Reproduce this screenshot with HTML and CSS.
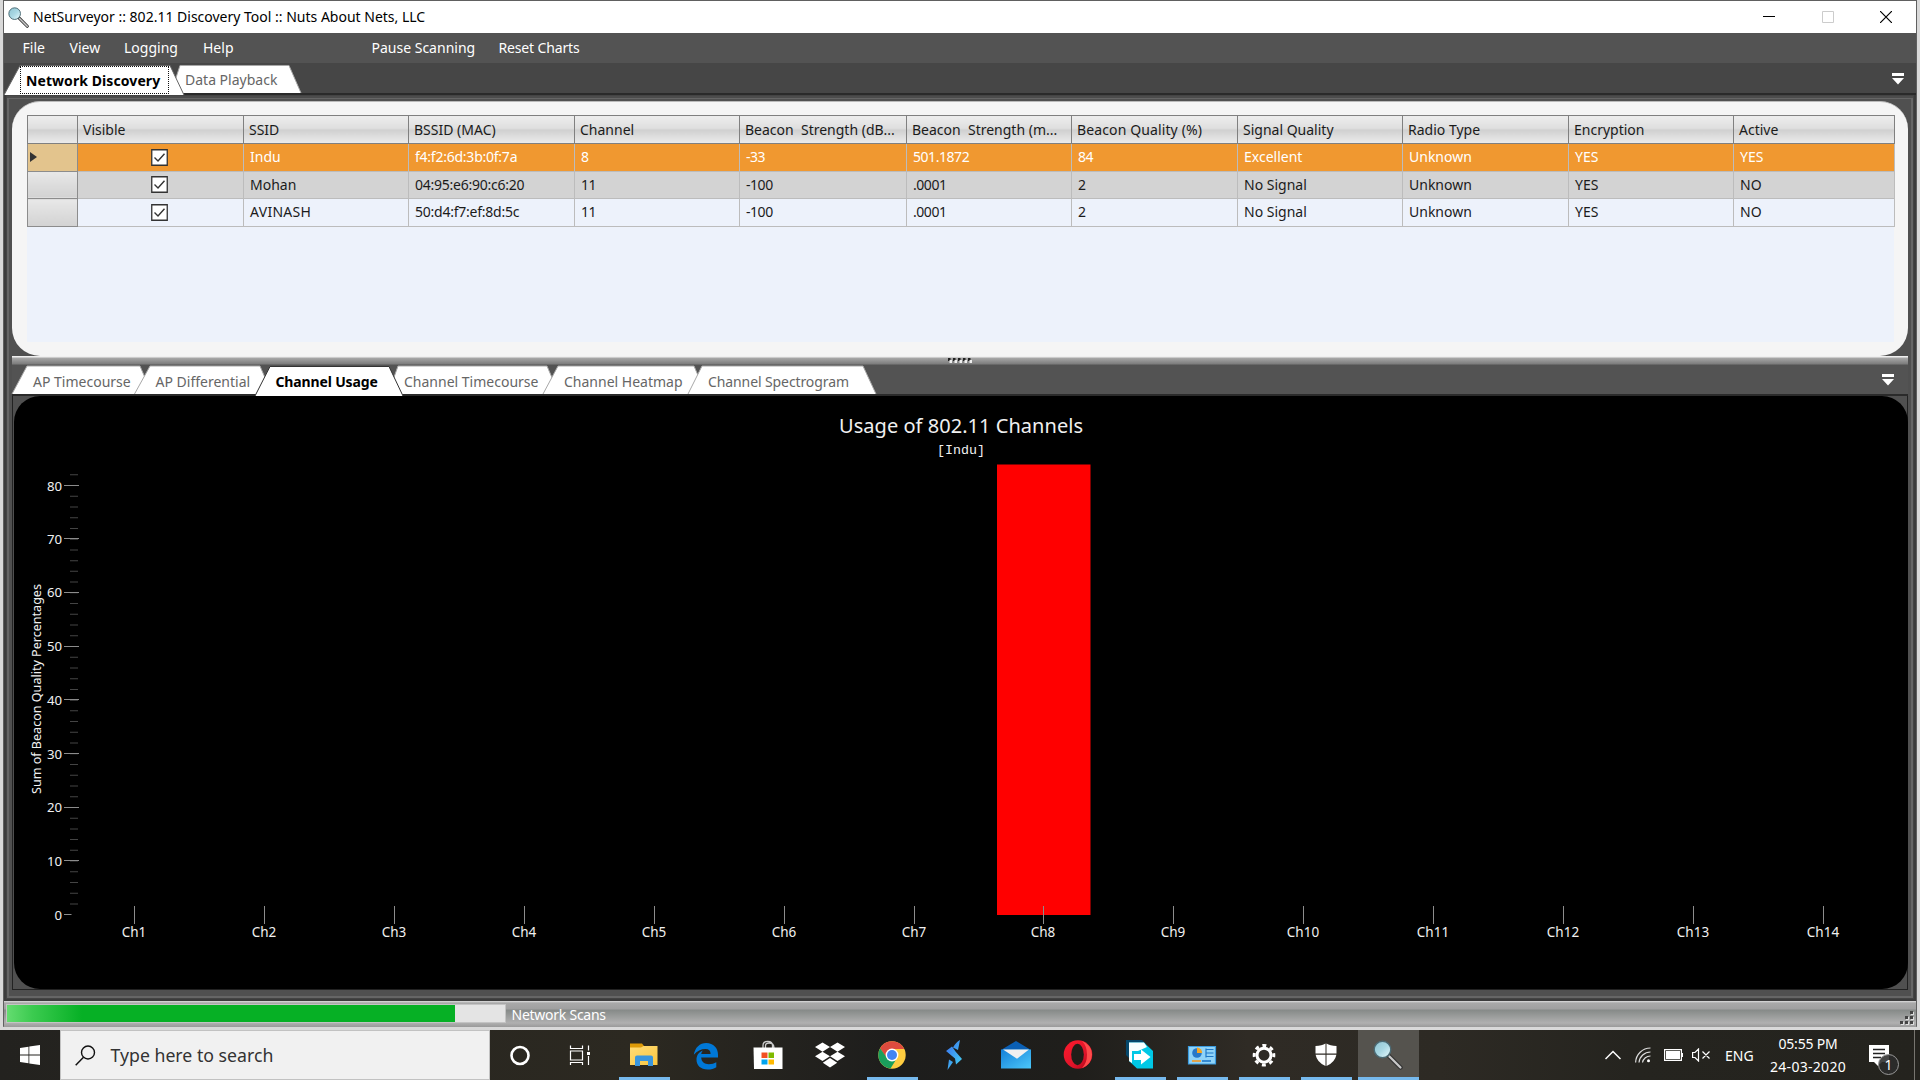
FILE: index.html
```html
<!DOCTYPE html>
<html lang="en">
<head>
<meta charset="utf-8">
<title>NetSurveyor</title>
<link rel="stylesheet" href="styles.css">
</head>
<body>
<svg width="0" height="0" class="defs">
  <defs>
    <linearGradient id="lens" x1="0" y1="0" x2="1" y2="1"><stop offset="0" stop-color="#8fc4d2"/><stop offset=".5" stop-color="#a9d8e4"/><stop offset="1" stop-color="#eafbff"/></linearGradient>
    <linearGradient id="folder" x1="0" y1="0" x2="1" y2="1"><stop offset="0" stop-color="#ffdc78"/><stop offset="1" stop-color="#fbc740"/></linearGradient>
    <linearGradient id="bolt" x1="0" y1="0" x2="1" y2="1"><stop offset="0" stop-color="#3a6cf0"/><stop offset="1" stop-color="#45d8f0"/></linearGradient>
    <linearGradient id="mail" x1="0" y1="0" x2="1" y2="1"><stop offset="0" stop-color="#1480d8"/><stop offset="1" stop-color="#4cc8fa"/></linearGradient>
    <linearGradient id="opera" x1="0" y1="0" x2="1" y2="1"><stop offset="0" stop-color="#ff1b2d"/><stop offset=".6" stop-color="#e0142a"/><stop offset="1" stop-color="#a70014"/></linearGradient>
    <symbol id="magnifier" viewBox="0 0 30 30">
      <path d="M16 16L27.500 27.500" stroke="#333" stroke-width="4.500" stroke-linecap="round"/>
      <path d="M16.500 16.500L27.500 27.500" stroke="#c9c9c9" stroke-width="2.200" stroke-linecap="round"/>
      <circle cx="9.500" cy="9.500" r="8.300" fill="url(#lens)" stroke="#4b6a74" stroke-width="1.400"/>
    </symbol>
    <symbol id="overflow" viewBox="0 0 12 12"><path d="M0 0H12V3H0ZM0 5H12L6 11.500Z" fill="#fff"/></symbol>
  </defs>
</svg>
<div class="screen">
  <main class="window">
    <header class="titlebar">
      <svg class="app-icon"><use href="#magnifier"/></svg>
      <h1>NetSurveyor :: 802.11 Discovery Tool :: Nuts About Nets, LLC</h1>
      <div class="controls">
        <svg width="12" height="12" viewBox="0 0 12 12"><path d="M0 5.500H12" stroke="#000"/></svg>
        <svg width="12" height="12" viewBox="0 0 12 12"><path d="M.5 .5H11.500V11.500H.5Z" fill="none" stroke="#ccc"/></svg>
        <svg width="12" height="12" viewBox="0 0 12 12"><path d="M0 0L12 12M12 0L0 12" stroke="#000" stroke-width="1.200"/></svg>
      </div>
    </header>
    <nav class="menu">
      <span class="m-file">File</span><span class="m-view">View</span><span class="m-log">Logging</span><span class="m-help">Help</span><span class="m-pause">Pause Scanning</span><span class="m-reset">Reset Charts</span>
    </nav>
    <div class="tabs tabs-main">
      <div class="tab active first w-discovery"><svg viewBox="0 0 180 30" preserveAspectRatio="none"><path d="M0 30L16 .5H166L180 30" /></svg><span class="focus">Network Discovery</span></div>
      <div class="tab w-playback"><svg viewBox="0 0 121 29" preserveAspectRatio="none"><path d="M-9 29L0 .5H109L121 29"/></svg><span>Data Playback</span></div>
      <svg class="overflow"><use href="#overflow"/></svg>
    </div>
    <div class="frame">
      <section class="networks">
        <table class="grid">
          <colgroup><col class="c50"><col class="c166"><col class="c165"><col class="c166"><col class="c165"><col class="c167"><col class="c165"><col class="c166"><col class="c165"><col class="c166"><col class="c165"><col class="c161"></colgroup>
          <thead><tr><th></th><th>Visible</th><th>SSID</th><th>BSSID (MAC)</th><th>Channel</th><th>Beacon&nbsp; Strength (dB...</th><th>Beacon&nbsp; Strength (m...</th><th class="wide">Beacon Quality (%)</th><th>Signal Quality</th><th>Radio Type</th><th>Encryption</th><th>Active</th></tr></thead>
          <tbody>
            <tr class="selected"><td class="head"><i class="pointer"></i></td><td class="chk"><svg width="17" height="17" viewBox="0 0 17 17"><path d="M.75 .75H16.250V16.250H.75Z" fill="#fff" stroke="#333" stroke-width="1.300"/><path d="M3.500 8.500L7 12L13.500 4.800" fill="none" stroke="#333" stroke-width="1.400"/></svg></td><td>Indu</td><td class="mac">f4:f2:6d:3b:0f:7a</td><td>8</td><td class="num">-33</td><td class="num">501.1872</td><td class="num">84</td><td>Excellent</td><td>Unknown</td><td>YES</td><td>YES</td></tr>
            <tr class="alt"><td class="head"></td><td class="chk"><svg width="17" height="17" viewBox="0 0 17 17"><path d="M.75 .75H16.250V16.250H.75Z" fill="#fff" stroke="#333" stroke-width="1.300"/><path d="M3.500 8.500L7 12L13.500 4.800" fill="none" stroke="#333" stroke-width="1.400"/></svg></td><td>Mohan</td><td class="mac">04:95:e6:90:c6:20</td><td class="num">11</td><td class="num">-100</td><td class="num">.0001</td><td>2</td><td>No Signal</td><td>Unknown</td><td>YES</td><td>NO</td></tr>
            <tr><td class="head"></td><td class="chk"><svg width="17" height="17" viewBox="0 0 17 17"><path d="M.75 .75H16.250V16.250H.75Z" fill="#fff" stroke="#333" stroke-width="1.300"/><path d="M3.500 8.500L7 12L13.500 4.800" fill="none" stroke="#333" stroke-width="1.400"/></svg></td><td class="caps">AVINASH</td><td class="mac">50:d4:f7:ef:8d:5c</td><td class="num">11</td><td class="num">-100</td><td class="num">.0001</td><td>2</td><td>No Signal</td><td>Unknown</td><td>YES</td><td>NO</td></tr>
          </tbody>
        </table>
      </section>
      <div class="splitter"><svg width="24" height="5" viewBox="0 0 24 5"><path d="M0 1.500H24" stroke="#222" stroke-width="3" stroke-dasharray="2.500 2.500"/><path d="M1.500 3.500H24" stroke="#eee" stroke-width="3" stroke-dasharray="2.500 2.500"/></svg></div>
      <div class="tabs tabs-charts">
        <div class="tab w-time"><svg viewBox="0 0 132 28"><path d="M0 28L15 0H128L140 28"/></svg><span>AP Timecourse</span></div>
        <div class="tab w-diff"><svg viewBox="0 0 128 28"><path d="M-9.500 28L6 0H116L128 28"/></svg><span>AP Differential</span></div>
        <div class="tab active w-usage"><svg viewBox="0 0 132 30"><path d="M-15 30L0 .5H119L133 30"/></svg><span>Channel Usage</span></div>
        <div class="tab w-ctime"><svg viewBox="0 0 150 28"><path d="M-10 28L0 0H149L161 28"/></svg><span>Channel Timecourse</span></div>
        <div class="tab w-heat"><svg viewBox="0 0 140 28"><path d="M-9 28L6 0H142L154 28"/></svg><span>Channel Heatmap</span></div>
        <div class="tab w-spec"><svg viewBox="0 0 174 28"><path d="M-14 28L0 0H161L174 28"/></svg><span>Channel Spectrogram</span></div>
        <svg class="overflow"><use href="#overflow"/></svg>
      </div>
      <section class="chart">
        <svg width="1894" height="593" viewBox="14 396 1894 593">
          <text class="chart-title" x="961" y="432.500" textLength="244">Usage of 802.11 Channels</text>
          <text class="chart-sub" x="961" y="454">[Indu]</text>
          <rect x="997" y="464.500" width="93.500" height="450.500" fill="#f00"/>
          <text class="axis-title" transform="translate(41 689) rotate(-90)" textLength="210">Sum of Beacon Quality Percentages</text>
          <path class="minor" d="M74 904.500V474"/>
          <path class="major" d="M64 485.500H79M64 538.500H79M64 592.500H79M64 646.500H79M64 699.500H79M64 753.500H79M64 807.500H79M64 860.500H79M64 914.500H71.500"/>
          <g class="ylabels">
            <text x="62" y="491">80</text><text x="62" y="543.500">70</text><text x="62" y="597">60</text><text x="62" y="651">50</text><text x="62" y="705">40</text><text x="62" y="758.500">30</text><text x="62" y="812">20</text><text x="62" y="866">10</text><text x="62" y="919.500">0</text>
          </g>
          <path class="major" d="M134.500 906V924M264.500 906V924M394.500 906V924M524.500 906V924M654.500 906V924M784.500 906V924M914.500 906V924M1043.500 906V924M1173.500 906V924M1303.500 906V924M1433.500 906V924M1563.500 906V924M1693.500 906V924M1823.500 906V924"/>
          <g class="xlabels">
            <text x="134" y="937">Ch1</text><text x="264" y="937">Ch2</text><text x="394" y="937">Ch3</text><text x="524" y="937">Ch4</text><text x="654" y="937">Ch5</text><text x="784" y="937">Ch6</text><text x="914" y="937">Ch7</text><text x="1043" y="937">Ch8</text><text x="1173" y="937">Ch9</text><text x="1303" y="937">Ch10</text><text x="1433" y="937">Ch11</text><text x="1563" y="937">Ch12</text><text x="1693" y="937">Ch13</text><text x="1823" y="937">Ch14</text>
          </g>
        </svg>
      </section>
    </div>
    <footer class="status">
      <div class="progress"><div class="bar"></div></div>
      <span>Network Scans</span>
      <svg class="grip" width="16" height="16" viewBox="0 0 16 16"><path d="M3 13h3v3h-3zM8 13h3v3h-3zM13 13h3v3h-3zM8 8h3v3h-3zM13 8h3v3h-3zM13 3h3v3h-3z" fill="#ddd"/><path d="M2 12h3v3h-3zM7 12h3v3h-3zM12 12h3v3h-3zM7 7h3v3h-3zM12 7h3v3h-3zM12 2h3v3h-3z" fill="#444"/></svg>
    </footer>
  </main>
  <div class="taskbar">
    <div class="start"><svg width="20" height="20" viewBox="0 0 20 20"><path d="M0 3L8.500 1.700V9.500H0ZM9.300 1.500L20 0V9.500H9.300ZM0 10.500H8.500V18.300L0 17ZM9.300 10.500H20V20L9.300 18.500Z" fill="#fff"/></svg></div>
    <div class="search"><svg width="21" height="21" viewBox="0 0 21 21"><circle cx="13" cy="7.500" r="6.500" fill="none" stroke="#111" stroke-width="1.400"/><path d="M8.500 12.300L.7 20.200" stroke="#111" stroke-width="1.500"/></svg><span>Type here to search</span></div>
    <div class="apps">
      <div class="app"><svg viewBox="0 0 32 32"><circle cx="16" cy="16.500" r="8.500" fill="none" stroke="#fff" stroke-width="2.600"/></svg></div>
      <div class="app"><svg viewBox="0 0 32 32" fill="none" stroke="#fff" stroke-width="1.200"><path d="M4.500 6.500V9.500H16.500V6.500M4.500 12H16.500V21H4.500ZM4.500 26V23.500H16.500V26M22.500 6.500V11.500M22.500 17V26"/><path d="M21 14.500H24" stroke-width="3"/></svg></div>
      <div class="app open"><svg viewBox="0 0 32 32"><path d="M2 4.500H14L16 7H29V26H2Z" fill="#dd9a08"/><path d="M2 8.500H13L15.500 7H29.500V26H2Z" fill="url(#folder)"/><path d="M7 27V18.500Q7 16.500 9 16.500H23Q25 16.500 25 18.500V27H20V22H12V27Z" fill="#3a96dd"/></svg></div>
      <div class="app"><svg viewBox="0 0 32 32"><path d="M3.800 15.800C5 8.500 9.800 4 16.200 4C23.500 4 28 9.200 28 15.500V18.500H11.200C11.400 23 14.500 25.200 18.800 25.200C21.800 25.200 24.200 24.400 26.300 23.200V28.200C24 29.700 21 30.500 17.800 30.500C10.500 30.500 6.500 26.200 6.500 20.800C6.500 16.500 8.800 13.200 12.800 11.600C11.900 12.700 11.400 13.700 11.200 15H20.600C20.600 11.800 18.900 10 15.500 10C11 10 7 12 3.800 15.800Z" fill="#0078d7"/></svg></div>
      <div class="app"><svg viewBox="0 0 32 32"><path d="M11 9V6.500Q11 2.300 15.800 2.300Q20.500 2.300 20.500 6.500V9M13.500 9V7Q13.500 4 17 4Q22 4 22 9" fill="none" stroke="#ccc" stroke-width="1.300"/><path d="M1.500 8.500H30.500V30H2Z" fill="#fff"/><path d="M9.500 13.500H15.500V19H9.500Z" fill="#f25022"/><path d="M16.500 13.500H22V19H16.500Z" fill="#7fba00"/><path d="M9.500 20.500H15.500V25.500H9.500Z" fill="#00a4ef"/><path d="M16.500 20.500H22V25.500H16.500Z" fill="#ffb900"/></svg></div>
      <div class="app"><svg viewBox="0 0 32 32"><path d="M8.500 3.500L16 8L8.500 12.800L1 8ZM23.500 3.500L31 8L23.500 12.800L16 8ZM8.500 12.800L16 17.300L8.500 22L1 17.300ZM23.500 12.800L31 17.300L23.500 22L16 17.300ZM8.800 23.800L16 19L23.200 23.800L16 28.500Z" fill="#fff"/></svg></div>
      <div class="app open"><svg viewBox="0 0 32 32"><circle cx="16" cy="16" r="13.700" fill="#ffcd40"/><path d="M4.100 9.200A13.700 13.700 0 0 1 27.900 9.200L27.900 10H16L10.500 19Z" fill="#dd4b3e"/><path d="M4.100 9.200L11 19L19.500 21.500L14.500 29.600A13.700 13.700 0 0 1 4.100 9.200Z" fill="#1a9f5c"/><circle cx="16" cy="16" r="6.400" fill="#fff"/><circle cx="16" cy="16" r="5" fill="#4285f4"/></svg></div>
      <div class="app"><svg viewBox="0 0 32 32"><path d="M22 1L20 11L15 8.500Q18 3 22 1ZM14 7.500L17.500 12.500L24 20L18 25.500L17 19.500L8 12ZM11 20.500L15 23L9.500 31Z" fill="url(#bolt)"/></svg></div>
      <div class="app"><svg viewBox="0 0 32 32"><path d="M1 11L16 2L31 11V14H1Z" fill="#0a5fb4"/><path d="M1 10.500H31V29.500H1Z" fill="url(#mail)"/><path d="M3 10.500H29L17 19.700Z" fill="#f0f0f0"/></svg></div>
      <div class="app"><svg viewBox="0 0 32 32"><ellipse cx="16" cy="15.500" rx="14.300" ry="14.300" fill="url(#opera)"/><path d="M20 2Q30 6 30 15.500T20 29.200Q25 24 25 15.500T20 2Z" fill="#ff4b4b"/><ellipse cx="15.500" cy="15.500" rx="6.300" ry="10.700" fill="#211e19"/></svg></div>
      <div class="app open"><svg viewBox="0 0 32 32"><path d="M2 1H18L22 5V20H6L2 16Z" fill="#05476b"/><path d="M5 3.500H20L29 12V29.500H13L5 22Z" fill="#00c8e6"/><path d="M5 3.500H20L23 8L14 12H8V24L5 22Z" fill="#f7ffff"/><path d="M10 15H17V10.500L26.500 18L17 25.500V21H10Z" fill="#fff"/></svg></div>
      <div class="app open"><svg viewBox="0 0 32 32"><path d="M2.500 7.500H29.500V25H2.500Z" fill="#8fd3f8" stroke="#3a9be0" stroke-width="1.200"/><circle cx="11" cy="14" r="4.800" fill="#2878c8"/><path d="M11 14V8.500A5.500 5.500 0 0 1 16.200 14Z" fill="#f5a623"/><path d="M20 10.500H27.500M20 14H27.500M20 17.500H27.500M20 9.500V18.500" stroke="#1f78c8" stroke-width="1.200"/><path d="M6 22H15" stroke="#f59a23" stroke-width="1.600"/><path d="M16 22H25" stroke="#1f78c8" stroke-width="1.600"/></svg></div>
      <div class="app open"><svg viewBox="0 0 32 32" fill="none" stroke="#fff"><circle cx="16" cy="16.200" r="7" stroke-width="3"/><circle cx="16" cy="16.200" r="9.800" stroke-width="3" stroke-dasharray="3.850 3.850" transform="rotate(-11 16 16.200)"/></svg></div>
      <div class="app open"><svg viewBox="0 0 32 32"><path d="M15.500 4.500Q12 6.800 5.500 7V14.500H15.500ZM16.500 4.500Q20 6.800 26.500 7V14.500H16.500ZM5.600 15.800H15.500V27Q7 23.500 5.600 15.800ZM16.500 15.800H26.400Q25 23.500 16.500 27Z" fill="#fff"/></svg></div>
      <div class="app open current"><svg viewBox="0 0 32 32"><use href="#magnifier" x="1" y="1" width="30" height="30"/></svg></div>
    </div>
    <div class="tray">
      <svg class="t-chev" width="16" height="10" viewBox="0 0 16 10"><path d="M.5 9L8 1.500L15.500 9" fill="none" stroke="#fff" stroke-width="1.500"/></svg>
      <svg class="t-wifi" width="16" height="16" viewBox="0 0 16 16" fill="none" stroke="#ddd" stroke-width="1.200"><path d="M.6 15.500A15 15 0 0 1 15.500 1M4 15.500A11.500 11.500 0 0 1 15.500 5M7.500 15.500A8 8 0 0 1 15.500 9"/><circle cx="13.500" cy="13.800" r="1.500" fill="#fff" stroke="none"/></svg>
      <svg class="t-bat" width="19" height="12" viewBox="0 0 19 12"><path d="M.6 .6H17.400V11.400H.6Z" fill="none" stroke="#fff" stroke-width="1.200"/><path d="M2 2H16V10H2Z" fill="#fff"/><path d="M18.400 4V8" stroke="#fff" stroke-width="1.200"/></svg>
      <svg class="t-vol" width="18" height="14" viewBox="0 0 18 14" fill="none" stroke="#fff" stroke-width="1.200"><path d="M.6 4.500H3L6.500 1V13L3 9.500H.6ZM10.500 3.500L17.500 10.500M17.500 3.500L10.500 10.500"/></svg>
      <span class="lang">ENG</span>
      <div class="clock"><span class="time">05:55 PM</span><span class="date">24-03-2020</span></div>
      <div class="notify"><svg width="20" height="21" viewBox="0 0 20 21"><path d="M0 0H20V17H13L9 21L5 17H0Z" fill="#fff"/><path d="M4 4.500H16M4 8.500H16M4 12.500H12" stroke="#222" stroke-width="1.300"/></svg><b>1</b></div>
      <i class="peek"></i>
    </div>
  </div>
</div>
</body>
</html>
```
FILE: styles.css
```css
* { box-sizing: border-box; }
body { margin: 0; background: #dcdcdc; font: 14px "Noto Sans", "Open Sans", sans-serif; overflow: hidden; }
.defs { position: absolute; }
.screen { width: 1920px; height: 1080px; display: flex; flex-direction: column; background: #d9d9d9; }
.window { width: 1914px; height: 1027px; margin: 0 3px 3px; border: 1px solid #606060; border-bottom-color: #8a8a8a; display: flex; flex-direction: column; background: #4f4f4f; flex: none; }

.titlebar { height: 32px; background: #fff; display: flex; align-items: center; flex: none; }
.app-icon { width: 21px; height: 21px; margin-left: 4px; }
.titlebar h1 { margin: 0 0 0 4px; font-size: 14px; font-weight: 400; line-height: 32px; color: #000; white-space: pre; }
.controls { margin-left: auto; display: flex; gap: 46.500px; padding-right: 24px; }

.menu { height: 30px; background: #535353; color: #fff; line-height: 30px; display: flex; flex: none; padding-left: 18.500px; }
.menu span { white-space: pre; }
.m-file { width: 47px; }
.m-view { width: 54.500px; }
.m-log { width: 79px; }
.m-help { width: 168.500px; }
.m-pause { width: 127px; }
.m-reset { letter-spacing: -.15px; }

.tabs { display: flex; position: relative; z-index: 1; flex: none; }
.tab { position: relative; color: #666; white-space: pre; }
.tab svg { position: absolute; left: 0; top: 0; width: 100%; height: 100%; overflow: visible; }
.tab path { fill: #fff; stroke: #a8a8a8; stroke-width: 1; }
.tab.active { z-index: 2; color: #000; font-weight: 700; }
.tab.active path { stroke: #333; }
.tab.first path { stroke: #666; }
.tab span { position: relative; }
.overflow { width: 12px; height: 12px; }

.tabs-main { height: 32px; background: #464646; padding-top: 2px; border-bottom: 2px solid #2a2a2a; }
.tabs-main .tab { height: 28px; line-height: 30px; }
.tabs-main .first { height: 30px; }
.w-discovery { width: 180px; padding-left: 16px; }
.focus { display: block; width: 149px; height: 28px; margin-top: 1px; line-height: 27px; padding-left: 5px; letter-spacing: .08px; border: 1px dotted #111; }
.w-playback { width: 116px; padding-left: 1px; }
.w-playback svg { left: -4px; width: 121px; }
.tabs-main .overflow { margin: 8px 12px 0 auto; }

.frame { height: 906px; flex: none; background: #505050; border: solid #3c3c3c; border-width: 0 2px 2px; padding: 6px 6px 9px; box-shadow: inset 0 0 0 1px #444, inset 0 3px 0 #4c4c4c, inset 3px 4px 0 #666, inset -3px -3px 0 #666; display: flex; flex-direction: column; }
.networks { height: 255px; flex: none; border-radius: 28px; background: linear-gradient(#edf2fb, #edf2fb) 15px 14px / 1867px 226px no-repeat, #f5f5f5; padding: 13px 13px 14px 15px; border-top: 1px solid #bbb; display: flex; flex-direction: column; }
.grid { width: 1867px; table-layout: fixed; border-collapse: collapse; color: #1b1b1b; border-top: 1px solid #808080; }
.c50 { width: 50px; } .c161 { width: 161px; } .c165 { width: 165px; } .c166 { width: 166px; } .c167 { width: 167px; }
.grid th, .grid td { height: 27.500px; padding: 0 0 0 6px; border: 1px solid #bcbcbc; text-align: left; font-weight: 400; line-height: 26px; white-space: pre; overflow: hidden; }
.grid th { height: 28px; line-height: 25px; padding: 0 0 1px 5px; border-color: #808080; background: linear-gradient(#ededed, #dedede 45%, #d0d0d0 50%, #ececec); }
.grid .wide { letter-spacing: .12px; }
.grid .head { background: linear-gradient(#e8e8e8, #d2d2d2); border-color: #8c8c8c; padding: 0; }
.selected td { background: #f09830; color: #fff; }
.grid .selected .head { background: #e3c48d; }
.alt td { background: #d3d3d3; }
.grid .chk { padding: 0; text-align: center; line-height: 0; vertical-align: middle; }
.grid .chk svg { margin-right: 2px; vertical-align: middle; }
.grid .mac { letter-spacing: -.24px; }
.grid .num { letter-spacing: -.45px; }
.grid .caps { letter-spacing: .3px; }
.pointer { display: block; margin-left: 2px; width: 0; border: solid transparent; border-width: 5.500px 0 5.500px 7px; border-left-color: #333; }

.splitter { height: 9px; flex: none; background: linear-gradient(#f0f0f0, #f0f0f0 1px, #a8a8a8 2px, #7c7c7c 8px, #555); display: flex; justify-content: center; padding-top: 2px; }
.tabs-charts { height: 31px; background: #535353; padding-top: 1px; border-bottom: 2px solid #2a2a2a; }
.tabs-charts .tab { height: 28px; line-height: 32px; }
.tabs-charts .active { height: 30px; }
.w-time { width: 132px; padding-left: 21px; }
.w-diff { width: 125.500px; padding-left: 11.500px; }
.w-usage { width: 128.500px; padding-left: 6px; letter-spacing: -.15px; }
.w-ctime { width: 153.500px; padding-left: 6px; }
.w-heat { width: 150px; padding-left: 12.500px; }
.w-spec { width: 174px; padding-left: 6.500px; letter-spacing: -.1px; }
.tabs-charts .tab svg { width: auto; }
.tabs-charts .overflow { margin: 8px 14px 0 auto; }

.chart { flex: 1; background: #505050; border: 1px solid #222; border-top: 0; padding-left: 1px; min-height: 0; }
.chart > svg { display: block; background: #000; border-radius: 26px; }
.chart text { font-family: "Noto Sans", sans-serif; font-size: 13.500px; fill: #f0f0f0; }
.chart .chart-title { font-size: 20px; text-anchor: middle; }
.chart .chart-sub { font-family: "Liberation Mono", monospace; font-size: 13.300px; text-anchor: middle; }
.chart .axis-title { font-size: 12.600px; text-anchor: middle; }
.minor { stroke: #444; stroke-width: 8; stroke-dasharray: 1 9.730; }
.major { stroke: #8c8c8c; fill: none; }
.chart .ylabels text { text-anchor: end; font-size: 13.200px; }
.chart .xlabels text { text-anchor: middle; }

.status { height: 26px; flex: none; background: linear-gradient(#dedede, #a9a9a9 2px, #a0a0a0 8px, #868a88 9px, #b0b0b0 22px, #9a9a9a); display: flex; align-items: flex-start; padding: 3px 2px 0; color: #fff; }
.progress { width: 500px; height: 19px; background: #e4e4e4; border: 1px solid #c4c4c4; }
.bar { width: 448px; height: 17px; background: linear-gradient(90deg, #64dc70, #3ccb50 25px, #06b025 75px); }
.status span { margin-left: 5.500px; line-height: 22px; letter-spacing: -.25px; }
.grip { margin: 5px 0 0 auto; }

.taskbar { height: 50px; display: flex; background: linear-gradient(90deg, #23221f, #2c2921 33%, #1d1d1c 47%, #1f1e1b 56%, #2f2b25 65%, #2d2a24 75%, #25241f 85%, #24231e); flex: none; color: #fff; }
.start { width: 60px; display: flex; align-items: center; justify-content: center; }
.search { width: 429.500px; background: #f1f1f1; border: 1px solid #c2c2c2; color: #333; display: flex; align-items: center; padding-left: 14px; font-size: 17.700px; }
.search svg { margin-right: 14.500px; }
.apps { display: flex; margin-left: -1px; }
.app { width: 62px; height: 50px; padding: 9px 15px; position: relative; }
.app svg { width: 32px; height: 32px; display: block; }
.app.open { background: linear-gradient(#76b9ed, #76b9ed) 6px 47px / 51px 3px no-repeat; }
.app.current { background: linear-gradient(#76b9ed, #76b9ed) 1px 47px / 61px 3px no-repeat, linear-gradient(#55534e, #55534e) 1px 0 / 61px 50px no-repeat; }

.tray { margin-left: auto; display: flex; align-items: center; padding-right: 5px; }
.t-chev { margin-right: 14px; }
.t-wifi { margin-right: 13px; }
.t-bat { margin-right: 9.500px; }
.t-vol { margin-right: 15px; }
.lang { width: 45px; }
.clock { width: 76px; display: flex; flex-direction: column; align-items: center; line-height: 23px; white-space: pre; }
.time { letter-spacing: -.2px; }
.date { letter-spacing: .3px; }
.notify { position: relative; width: 20px; height: 21px; margin: 0 25px 0 23px; }
.notify b { position: absolute; left: 9px; top: 9px; width: 21px; height: 21px; border: 1px solid #999; border-radius: 50%; background: #2c2c2ce0; font-weight: 400; font-size: 14px; line-height: 19px; text-align: center; }
.peek { width: 1px; height: 50px; background: #77756f; }
```
